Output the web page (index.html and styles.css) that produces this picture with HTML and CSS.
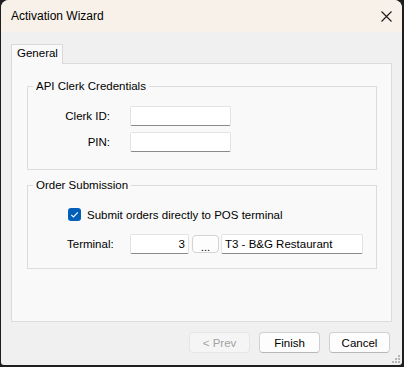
FILE: index.html
```html
<!DOCTYPE html>
<html>
<head>
<link rel="stylesheet" href="styles.css">
</head>
<body>

<div class="window">
  <div class="titlebar">
    <span class="title">Activation Wizard</span>
    <svg class="close" width="11" height="11" viewBox="0 0 11 11">
      <path d="M0.5 0.5 L10.5 10.5 M10.5 0.5 L0.5 10.5" stroke="#1a1a1a" stroke-width="1.1" fill="none"/>
    </svg>
  </div>

  <div class="content">
    <div class="tabs">
      <div class="tab">General</div>
    </div>
    <div class="panel">
      <fieldset class="group">
        <legend>API Clerk Credentials</legend>
        <div class="creds">
          <label for="clerk">Clerk ID:</label>
          <input type="text" id="clerk" class="field">
          <label for="pin">PIN:</label>
          <input type="text" id="pin" class="field">
        </div>
      </fieldset>

      <fieldset class="group second">
        <legend>Order Submission</legend>
        <div class="check-row">
          <span class="checkbox">
            <svg width="13" height="13" viewBox="0 0 13 13">
              <path d="M3.3 6.8 L5.5 9 L9.8 4.4" stroke="#fff" stroke-width="1.1" fill="none"/>
            </svg>
          </span>
          <span>Submit orders directly to POS terminal</span>
        </div>
        <div class="terminal-row">
          <label for="termno">Terminal:</label>
          <input type="text" id="termno" class="field num" value="3">
          <button class="browse">...</button>
          <input type="text" class="field name" value="T3 - B&amp;G Restaurant">
        </div>
      </fieldset>
    </div>

    <div class="buttons">
      <button class="btn" disabled>&lt; Prev</button>
      <button class="btn">Finish</button>
      <button class="btn">Cancel</button>
    </div>
  </div>

  <svg class="grip" width="8" height="8" viewBox="0 0 8 8">
    <rect x="6" y="0" width="2" height="2" fill="#b5b5b5"/>
    <rect x="3" y="3" width="2" height="2" fill="#b5b5b5"/>
    <rect x="6" y="3" width="2" height="2" fill="#b5b5b5"/>
    <rect x="0" y="6" width="2" height="2" fill="#b5b5b5"/>
    <rect x="3" y="6" width="2" height="2" fill="#b5b5b5"/>
    <rect x="6" y="6" width="2" height="2" fill="#b5b5b5"/>
  </svg>
</div>

</body>
</html>
```

FILE: styles.css
```css
* {
  box-sizing: border-box;
}

body {
  margin: 0;
  background-color: #1e1e1e;
  font-family: "Liberation Sans", Arial, sans-serif;
  font-size: 11.5px;
  color: #000;
}

.window {
  position: relative;
  margin-left: 1px;
  width: 401px;
  height: 365px;
  background-color: #f0f0f0;
  border-radius: 8px 8px 3px 3px;
  overflow: hidden;
}

.titlebar {
  height: 32px;
  background-color: #f8f1e9;
  display: flex;
  align-items: center;
  justify-content: space-between;
  padding: 0 10px;
  font-size: 12px;
}

.content {
  padding: 12px 10px 0 10px;
}

.tabs {
  display: flex;
}

.tab {
  position: relative;
  z-index: 1;
  width: 52px;
  height: 20px;
  margin-bottom: -1px;
  padding-left: 5px;
  line-height: 17px;
  background-color: #f9f9f9;
  border: 1px solid #d9d9d9;
  border-bottom: none;
}

.panel {
  height: 259px;
  padding: 14px 14px 0 15px;
  background-color: #f9f9f9;
  border: 1px solid #dcdcdc;
}

.group {
  margin: 0;
  padding: 0;
  border: 1px solid #dcdcdc;
  min-width: 0;
}

.group legend {
  margin-left: 5px;
  padding: 0 3px;
  line-height: 16px;
}

.group.second {
  margin-top: 7px;
}

.creds {
  display: grid;
  grid-template-columns: 82px 101px;
  column-gap: 20px;
  row-gap: 6px;
  align-items: center;
  padding: 12px 0 17px 0;
}

.creds label {
  text-align: right;
}

.field {
  height: 20px;
  margin: 0;
  padding: 0 3px;
  font: inherit;
  color: #000;
  background-color: #fff;
  border: 1px solid #e3e3e3;
  border-bottom-color: #8a8a8a;
  border-radius: 2px;
  outline: none;
}

.check-row {
  display: flex;
  align-items: center;
  height: 17px;
  margin-top: 13px;
  padding-left: 40px;
}

.checkbox {
  width: 13px;
  height: 13px;
  margin-right: 6px;
  background-color: #005fb8;
  border-radius: 3px;
  display: flex;
}

.terminal-row {
  display: flex;
  align-items: center;
  margin-top: 11px;
  margin-bottom: 14px;
  padding-left: 39px;
}

.terminal-row label {
  width: 63px;
  flex-shrink: 0;
}

.num {
  width: 59px;
  text-align: right;
}

.browse {
  width: 27px;
  height: 18px;
  margin: 0 2px 0 3px;
  padding: 5px 0 0 0;
  font: inherit;
  line-height: 10px;
  background-color: #fdfdfd;
  border: 1px solid #d3d3d3;
  border-radius: 4px;
}

.name {
  width: 142px;
}

.buttons {
  display: flex;
  justify-content: flex-end;
  gap: 9px;
  margin-top: 10px;
  margin-right: 2px;
}

.btn {
  width: 61px;
  height: 21px;
  padding: 0;
  font: inherit;
  color: #000;
  background-color: #fdfdfd;
  border: 1px solid #d0d0d0;
  border-bottom-color: #b8b8b8;
  border-radius: 4px;
}

.btn:disabled {
  color: #a2a2a2;
  background-color: #f5f5f5;
  border-color: #e6e6e6;
}

.grip {
  position: absolute;
  right: 2px;
  bottom: 2px;
}
```
